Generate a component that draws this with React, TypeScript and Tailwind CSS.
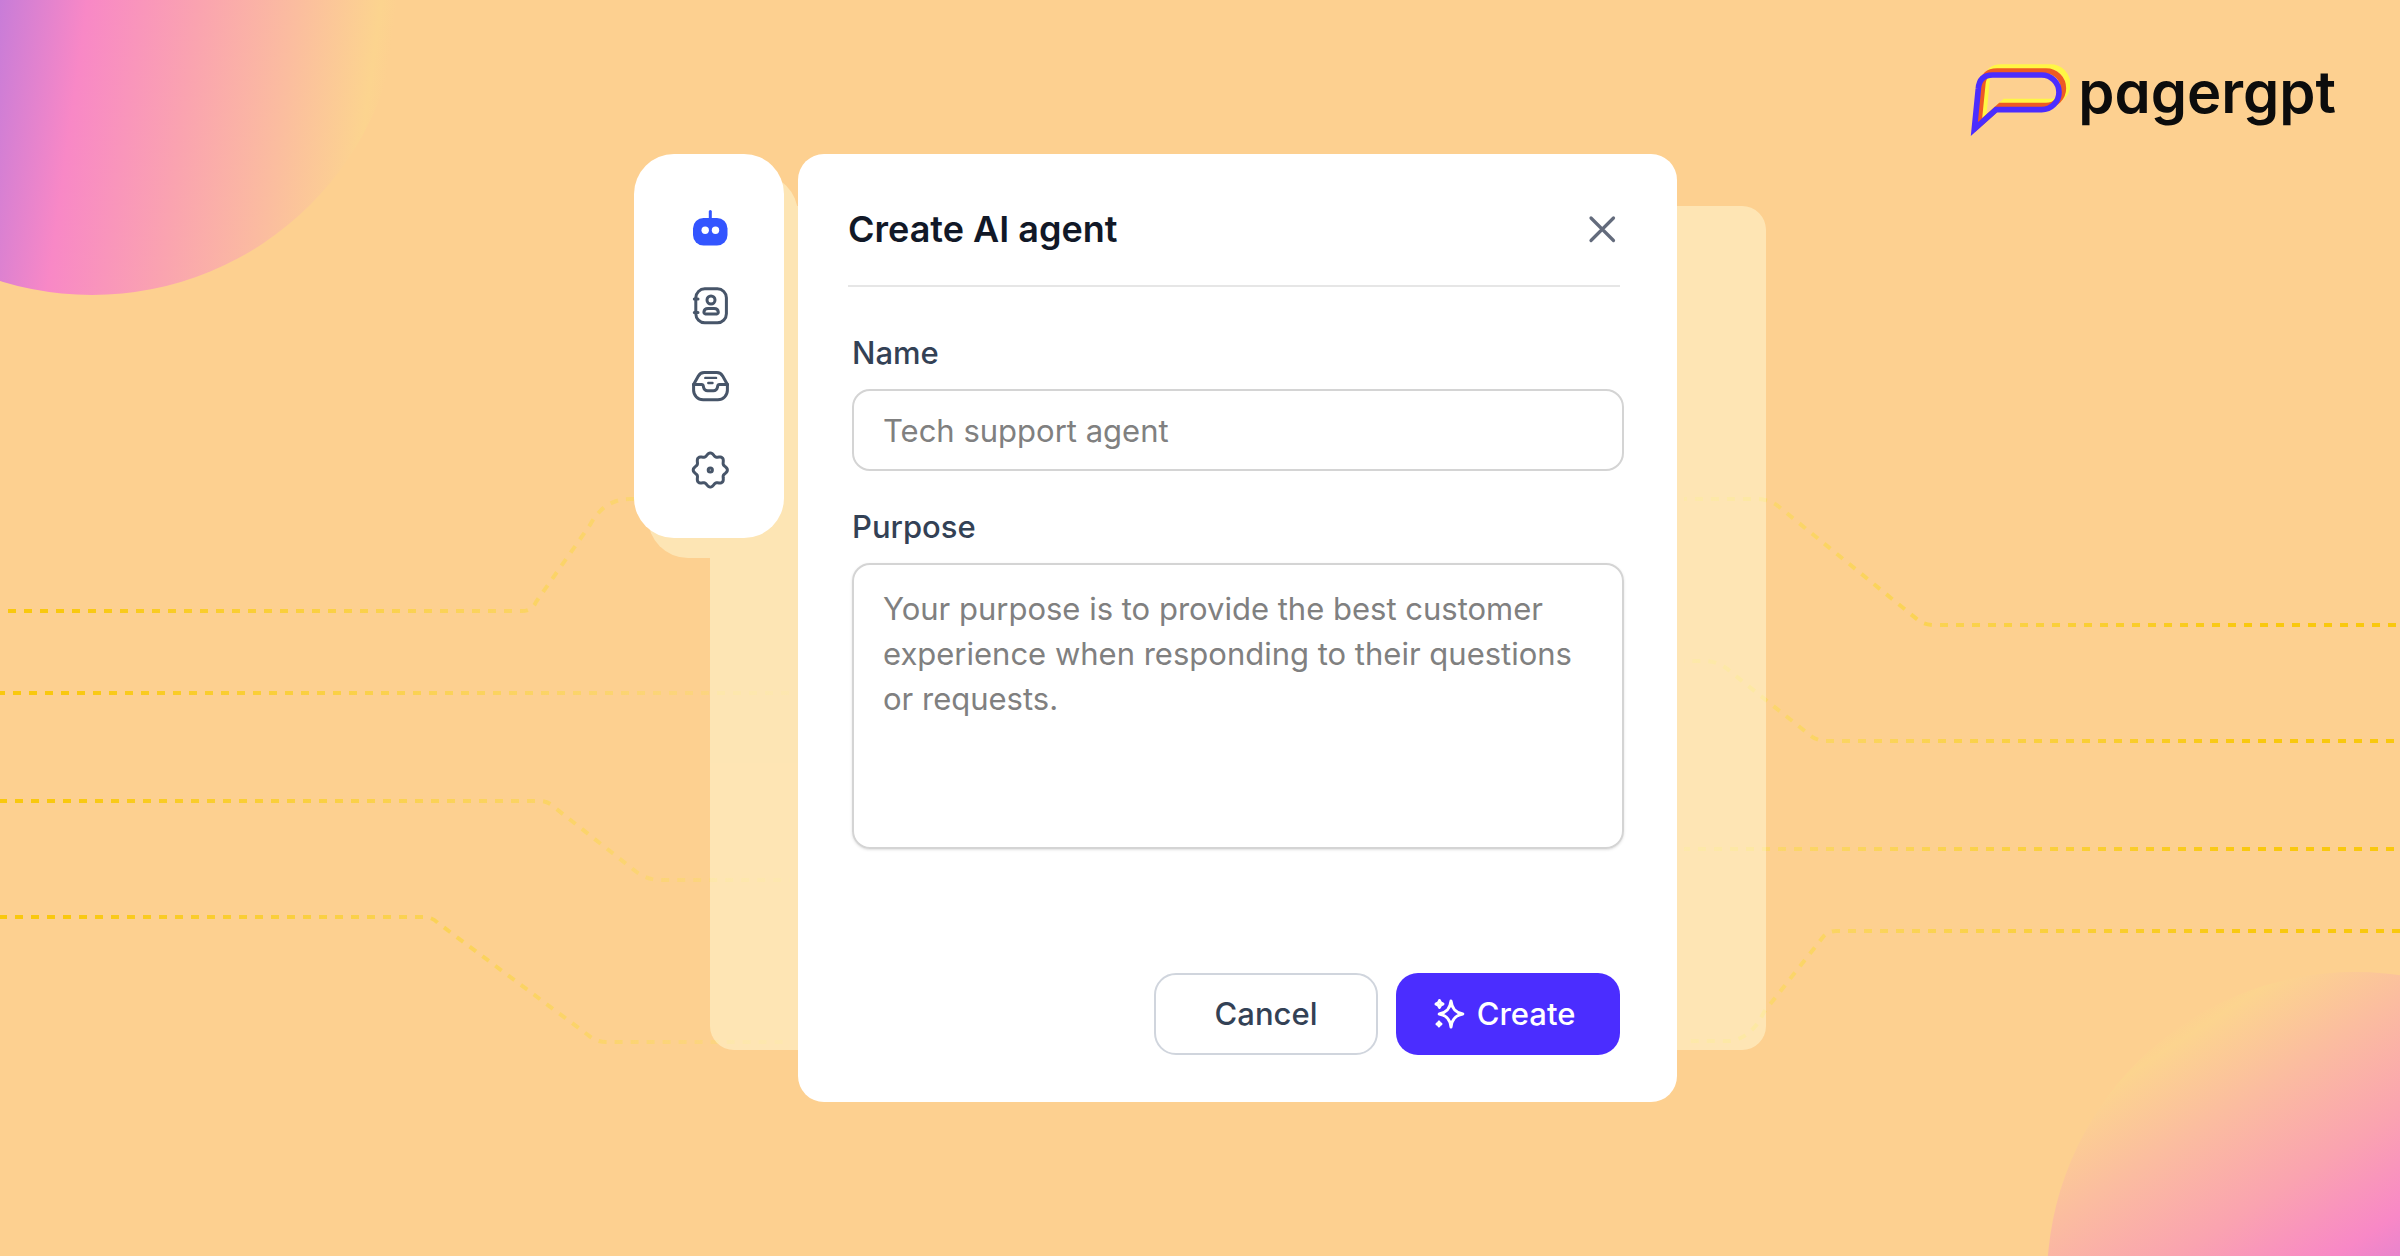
import { useState } from "react";

const navItems = ["AI agents", "Contacts", "Inbox", "Settings"];

// eight soft teeth around the centre of the settings icon
const gearPath =
  Array.from({ length: 96 }, (_, i) => {
    const a = (i / 96) * Math.PI * 2;
    const r = 15.6 + 1.5 * Math.cos(8 * a);
    return `${i ? "L" : "M"}${(21.3 + r * Math.cos(a)).toFixed(2)} ${(22 + r * Math.sin(a)).toFixed(2)}`;
  }).join("") + "Z";

function NavIcon({ name }: { name: string }) {
  if (name === "AI agents") {
    return (
      <svg className="size-10 overflow-visible" viewBox="0 0 40 40" fill="#3355ff" aria-hidden="true">
        <rect x="4" y="10" width="34.5" height="27.5" rx="10.5" />
        <path d="M21.3 3.5V12" stroke="#3355ff" strokeWidth="3" strokeLinecap="round" />
        <circle cx="16.2" cy="22.3" r="3.7" fill="#fff" />
        <circle cx="26.5" cy="22.3" r="3.7" fill="#fff" />
      </svg>
    );
  }
  return (
    <svg className="size-10 overflow-visible" viewBox="0 0 40 40" fill="none" stroke="#475569" strokeWidth="3" strokeLinecap="round" strokeLinejoin="round" aria-hidden="true">
      {name === "Contacts" && (
        <>
          <rect x="6.8" y="0.8" width="30.6" height="34" rx="9" />
          <path d="M5.3 11H9M5.3 24.5H9" />
          <circle cx="22" cy="12" r="4" />
          <path d="M16.4 25.9h11.4a1.6 1.6 0 0 0 1.5-1.7c-.2-2.4-1.8-3.6-4.1-3.6h-6.2c-2.3 0-3.9 1.2-4.1 3.6a1.6 1.6 0 0 0 1.5 1.7Z" />
        </>
      )}
      {name === "Inbox" && (
        <>
          <path d="M4.6 16.5v5.8a9.5 9.5 0 0 0 9.5 9.5h14.8a9.5 9.5 0 0 0 9.5-9.5v-5.8" />
          <path d="M4.6 16.5 9.2 8.2Q11.3 4.6 15.2 4.6H27.8Q31.7 4.6 33.8 8.2L38.4 16.5" />
          <path d="M4.6 16.5h8c1.9 0 1.6 1.4 2 3 .5 2.2 1.7 3.3 4 3.3h5.8c2.3 0 3.5-1.1 4-3.3.4-1.6.1-3 2-3h8" />
          <path d="M16.3 9.9h10.8M19.3 15h4.2" strokeWidth="2.4" />
        </>
      )}
      {name === "Settings" && (
        <>
          <path d={gearPath} />
          <circle cx="21.3" cy="22" r="2.1" />
        </>
      )}
    </svg>
  );
}

function Backdrop() {
  return (
    <svg className="absolute inset-0 size-full" viewBox="0 0 2400 1256" preserveAspectRatio="xMidYMid slice" fill="none" aria-hidden="true">
      <defs>
        <linearGradient id="blob-a" gradientUnits="userSpaceOnUse" x1="0" y1="0" x2="390" y2="54">
          <stop offset="0" stopColor="#c87cd8" />
          <stop offset="0.22" stopColor="#f888c6" />
          <stop offset="0.5" stopColor="#faa3b0" />
          <stop offset="0.75" stopColor="#fbbd9f" />
          <stop offset="0.96" stopColor="#fcd48f" />
          <stop offset="1" stopColor="#fdd090" />
        </linearGradient>
        <linearGradient id="blob-b" gradientUnits="userSpaceOnUse" x1="2380" y1="1356" x2="2168" y2="1030">
          <stop offset="0" stopColor="#c87cd8" />
          <stop offset="0.28" stopColor="#f888c6" />
          <stop offset="0.5" stopColor="#faa3b0" />
          <stop offset="0.75" stopColor="#fbbd9f" />
          <stop offset="0.96" stopColor="#fcd48f" />
          <stop offset="1" stopColor="#fdd090" />
        </linearGradient>
        <linearGradient id="trace-l" gradientUnits="userSpaceOnUse" x1="0" y1="0" x2="800" y2="0">
          <stop offset="0.08" stopColor="#f9c80e" />
          <stop offset="0.75" stopColor="#fad84a" stopOpacity="0.5" />
          <stop offset="1" stopColor="#fbe070" stopOpacity="0.2" />
        </linearGradient>
        <linearGradient id="trace-r" gradientUnits="userSpaceOnUse" x1="2400" y1="0" x2="1660" y2="0">
          <stop offset="0.2" stopColor="#f9c80e" />
          <stop offset="0.8" stopColor="#fad84a" stopOpacity="0.6" />
          <stop offset="1" stopColor="#fbe070" stopOpacity="0.4" />
        </linearGradient>
      </defs>
      <circle cx="92" cy="-14" r="309" fill="url(#blob-a)" />
      <circle cx="2355" cy="1280" r="308" fill="url(#blob-b)" />
      <g stroke="url(#trace-l)" strokeWidth="4" strokeDasharray="8 8">
        <path d="M8 611H522Q532 611 536 602L590 525Q604 499 630 499H700" />
        <path d="M-3 693.01L790 693" />
        <path d="M-1 801H540Q548 801 554 807L634 870Q646 880 660 880H790" />
        <path d="M-1 917H424Q432 917 438 923L588 1035Q596 1042 606 1042H790" />
      </g>
      <g stroke="url(#trace-r)" strokeWidth="4" strokeDasharray="8 8">
        <path d="M2396 625H1934Q1924 625 1918 620L1778 506Q1768 499 1756 499H1684" />
        <path d="M2394 741H1826Q1818 741 1811 736L1732 673Q1720 661 1704 661H1684" />
        <path d="M2394 849.01L1684 849" />
        <path d="M2400 931H1836Q1828 931 1823 937L1764 1012Q1752 1038 1730 1041H1684" />
      </g>
    </svg>
  );
}

function Logo() {
  const bubble = "M83 266 95 145Q98 104 138 104H285A52 52 0 0 1 285 208H148Z";
  return (
    <a href="#" className="flex items-center gap-2 text-[#0c0c0c]">
      <svg className="h-[74px] w-[100px]" viewBox="70 68 300 222" fill="none" strokeWidth="17" strokeMiterlimit="10" aria-hidden="true">
        <path d={bubble} stroke="#fff645" transform="translate(26 -24)" />
        <path d={bubble} stroke="#ee5a24" transform="translate(13 -12)" />
        <path d={bubble} stroke="#4b2dff" />
      </svg>
      <span className="-mt-4 text-[58px] leading-none font-semibold [font-feature-settings:'cv11'_1]">pagergpt</span>
    </a>
  );
}

export default function App() {
  const [active, setActive] = useState("AI agents");
  const [name, setName] = useState("");
  const [purpose, setPurpose] = useState("");

  return (
    <div className="relative min-h-screen overflow-hidden bg-[#fdd090] font-['Inter',sans-serif]">
      <Backdrop />

      <header className="relative flex justify-end pt-[63px] pr-16">
        <Logo />
      </header>

      <main className="relative mx-auto mt-[17px] flex w-full max-w-[1132px] items-start gap-[14px] pr-[89px]">
        {/* pale plates behind the cards */}
        <div className="absolute inset-0 opacity-45">
          <div className="absolute top-5 left-[14px] h-[384px] w-[150px] rounded-[40px] bg-[#ffffe0]" />
          <div className="absolute top-[52px] right-0 bottom-[52px] left-[76px] rounded-3xl bg-[#ffffe0]" />
        </div>

        <nav className="relative flex w-[150px] shrink-0 flex-col items-center gap-10 rounded-[40px] bg-white pt-[54px] pb-[50px]">
          {navItems.map((item) => (
            <button key={item} type="button" aria-label={item} aria-pressed={active === item} onClick={() => setActive(item)}>
              <NavIcon name={item} />
            </button>
          ))}
        </nav>

        <form onSubmit={(e) => e.preventDefault()} className="relative flex-1 rounded-[26px] bg-white pb-[47px]">
          <div className="mr-[57px] ml-[50px] flex h-[133px] items-center justify-between border-b-2 border-[#e6e6e6] pt-[18px]">
            <h1 className="text-4xl font-semibold text-[#111827]">Create AI agent</h1>
            <button type="button" aria-label="Close" className="px-1">
              <svg className="size-7" viewBox="0 0 28 28" stroke="#636b7c" strokeWidth="3.2" strokeLinecap="round" aria-hidden="true">
                <path d="M3 3l22.5 22.5M25.5 3l-22.5 22.5" />
              </svg>
            </button>
          </div>

          <div className="flex flex-col pt-[46px] pr-[53px] pl-[54px]">
            <label htmlFor="agent-name" className="text-[31px] leading-10 font-medium text-[#334155]">Name</label>
            <input id="agent-name" type="text" placeholder="Tech support agent" value={name} onChange={(e) => setName(e.target.value)} className="mt-4 h-[82px] rounded-[18px] border-2 border-[#d4d4d4] px-[29px] text-[31px] text-gray-700 outline-none placeholder:text-[#808080]" />
            <label htmlFor="agent-purpose" className="mt-9 text-[31px] leading-10 font-medium text-[#334155]">Purpose</label>
            <textarea id="agent-purpose" placeholder="Your purpose is to provide the best customer experience when responding to their questions or requests." value={purpose} onChange={(e) => setPurpose(e.target.value)} className="mt-4 h-[286px] resize-none rounded-[18px] border-2 border-[#d4d4d4] px-[29px] pt-[21px] text-[31px] leading-[45px] text-gray-700 shadow-sm outline-none placeholder:text-[#808080]" />
          </div>

          <div className="flex justify-end gap-[18px] pt-[124px] pr-[57px]">
            <button type="button" className="h-[82px] w-56 rounded-[22px] border-2 border-[#d0d5dd] text-[31px] font-medium text-[#334155]">Cancel</button>
            <button type="submit" className="flex h-[82px] w-56 items-center justify-center gap-3 rounded-[22px] bg-[#4b2dff] pr-2 text-[31px] font-medium text-white">
              <svg className="size-8" viewBox="0 0 32 32" fill="none" stroke="currentColor" strokeWidth="3" strokeLinejoin="round" aria-hidden="true">
                <path d="M18 3C19 10.5 22 14.5 29.8 16C22 17.5 19 21.5 18 29C17 21.5 14 17.5 6.2 16C14 14.5 17 10.5 18 3Z" />
                <path d="M6.5 2.5Q7.2 5.3 10 6Q7.2 6.7 6.5 9.5Q5.8 6.7 3 6Q5.8 5.3 6.5 2.5Z" />
                <path d="M6 24Q6.4 25.6 8 26Q6.4 26.4 6 28Q5.6 26.4 4 26Q5.600 25.600 6 24Z" />
              </svg>
              Create
            </button>
          </div>
        </form>
      </main>
    </div>
  );
}
